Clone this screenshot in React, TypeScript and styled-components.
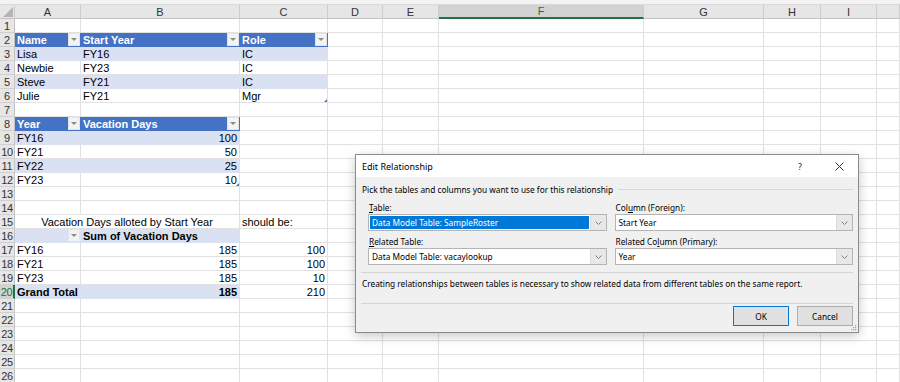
import React from "react";
import styled, { createGlobalStyle } from "styled-components";

const GRID = "#e1e1e1";
const BLUE = "#4472c4";
const BAND = "#d9e1f2";
const GREEN = "#217346";
const COLS = "15px 66px 159px 88px 55px 56px 205px 120px 57px 56px 1fr";

const Global = createGlobalStyle`
  html, body { margin: 0; padding: 0; background: #fff; overflow: hidden; }
  body { width: 900px; height: 382px; }
`;

const Page = styled.div`
  position: relative;
  width: 900px;
  height: 382px;
  overflow: hidden;
  font-family: "Liberation Sans", Arial, sans-serif;
  font-size: 11px;
  color: #000;
`;

const TopStrip = styled.div`
  height: 4px;
  background: #f3f3f3;
  border-bottom: 1px solid #dadada;
`;

const GridRow = styled.div`
  display: grid;
  grid-template-columns: ${COLS};
  height: 14px;
`;

const HeadCell = styled.div<{ $active?: boolean }>`
  box-sizing: border-box;
  height: 14px;
  background: ${(p) => (p.$active ? "#d2d2d2" : "#e6e6e6")};
  border-right: 1px solid #cdcdcd;
  border-bottom: ${(p) => (p.$active ? `2px solid ${GREEN}` : "1px solid #c4c4c4")};
  color: ${(p) => (p.$active ? GREEN : "#333")};
  display: flex;
  align-items: center;
  justify-content: center;
  font-size: 11px;
`;

const Corner = styled(HeadCell)`
  position: relative;
  svg { display: block; }
  align-items: flex-end;
  justify-content: flex-end;
  padding: 0 1px 1px 0;
`;

const RowHead = styled.div<{ $active?: boolean }>`
  box-sizing: border-box;
  height: 14px;
  background: ${(p) => (p.$active ? "#d2d2d2" : "#e6e6e6")};
  border-right: ${(p) => (p.$active ? `2px solid ${GREEN}` : "1px solid #c4c4c4")};
  border-bottom: 1px solid #d0d0d0;
  color: ${(p) => (p.$active ? GREEN : "#333")};
  display: flex;
  align-items: center;
  justify-content: center;
  font-size: 11px;
  letter-spacing: -0.3px;
`;

const Cell = styled.div<{
  $bg?: string;
  $color?: string;
  $bold?: boolean;
  $align?: string;
  $span?: number;
}>`
  grid-column: span ${(p) => p.$span || 1};
  position: relative;
  box-sizing: border-box;
  height: 14px;
  background: ${(p) => p.$bg || "#fff"};
  border-right: 1px solid ${(p) => p.$bg || GRID};
  border-bottom: 1px solid ${(p) => p.$bg || GRID};
  color: ${(p) => p.$color || "#000"};
  font-weight: ${(p) => (p.$bold ? 700 : 400)};
  display: flex;
  align-items: center;
  justify-content: ${(p) =>
    p.$align === "right" ? "flex-end" : p.$align === "center" ? "center" : "flex-start"};
  padding: 0 2px;
  white-space: nowrap;
`;

const CellText = styled.span<{ $grow?: boolean }>`
  flex: ${(p) => (p.$grow ? "1" : "0 0 auto")};
  overflow: visible;
`;

const FilterBtn = styled.span`
  flex: 0 0 12px;
  align-self: flex-start;
  height: 13px;
  margin-right: -2px;
  background: #f3f3f3;
  box-sizing: border-box;
  border: 1px solid #e4e4e4;
  display: flex;
  align-items: center;
  justify-content: center;
  &::after {
    content: "";
    width: 0;
    height: 0;
    border-left: 3px solid transparent;
    border-right: 3px solid transparent;
    border-top: 3px solid #8a8a8a;
  }
`;

const Marker = styled.span`
  position: absolute;
  right: 0;
  bottom: 0;
  width: 0;
  height: 0;
  border-left: 3px solid transparent;
  border-bottom: 3px solid ${BLUE};
`;

/* ---------- dialog ---------- */
const Dialog = styled.div`
  position: absolute;
  left: 355px;
  top: 154px;
  width: 504px;
  height: 179px;
  box-sizing: border-box;
  border: 1px solid #8a8a8a;
  background: #f0f0f0;
  box-shadow: 0 3px 10px rgba(0, 0, 0, 0.22);
  display: flex;
  flex-direction: column;
  font-family: "Noto Sans", "Open Sans", sans-serif;
  font-size: 8.3px;
  color: #000;
`;

const TitleBar = styled.div`
  height: 22px;
  background: #fff;
  display: flex;
  align-items: center;
  padding-left: 6px;
  flex: 0 0 auto;
`;

const Title = styled.span`
  flex: 1;
  font-size: 9px;
`;

const TitleBtn = styled.span<{ $w: number }>`
  width: ${(p) => p.$w}px;
  height: 22px;
  display: flex;
  align-items: center;
  justify-content: center;
  font-size: 9px;
  color: #222;
`;

const Body = styled.div`
  flex: 1;
  position: relative;
  padding: 6px 5px 0 6px;
  display: flex;
  flex-direction: column;
`;

const Heading = styled.div`
  height: 13px;
  display: flex;
  align-items: center;
  line-height: 13px;
  white-space: nowrap;
`;

const HeadLine = styled.span`
  flex: 1;
  height: 0;
  border-top: 1px solid #d7d7d7;
  margin-left: 5px;
`;

const Fields = styled.div`
  display: grid;
  grid-template-columns: 1fr 1fr;
  column-gap: 8px;
  margin: 5px 0 0 6px;
`;

const Field = styled.div<{ $top?: number }>`
  display: flex;
  flex-direction: column;
  margin-top: ${(p) => p.$top || 0}px;
`;

const Label = styled.div`
  height: 13px;
  line-height: 13px;
  margin-left: 1px;
  white-space: nowrap;
`;

const Combo = styled.div`
  height: 17px;
  box-sizing: border-box;
  background: #fff;
  border: 1px solid #b4b4b4;
  display: flex;
  align-items: stretch;
`;

const ComboText = styled.div<{ $sel?: boolean }>`
  flex: 1;
  margin: 1px;
  padding-left: 2px;
  display: flex;
  align-items: center;
  background: ${(p) => (p.$sel ? "#0078d7" : "transparent")};
  color: ${(p) => (p.$sel ? "#fff" : "#000")};
  white-space: nowrap;
`;

const ComboBtn = styled.div`
  width: 15px;
  background: #e8e8e8;
  border-left: 1px solid #dcdcdc;
  display: flex;
  align-items: center;
  justify-content: center;
`;

const Sep = styled.div<{ $top: number }>`
  margin-top: ${(p) => p.$top}px;
  margin-left: -1px;
  height: 0;
  border-top: 1px solid #d5d5d5;
`;

const Note = styled.div`
  margin-top: 4px;
  height: 13px;
  line-height: 13px;
  white-space: nowrap;
`;

const Buttons = styled.div`
  display: flex;
  justify-content: flex-end;
  gap: 8px;
  margin-top: 2px;
`;

const Btn = styled.div<{ $primary?: boolean }>`
  width: 56px;
  height: 20px;
  box-sizing: border-box;
  background: #e1e1e1;
  border: 1px solid ${(p) => (p.$primary ? "#0078d7" : "#adadad")};
  display: flex;
  align-items: center;
  justify-content: center;
`;

const Grip = styled.svg`
  position: absolute;
  right: 1px;
  bottom: 1px;
`;

type CellDef = {
  t?: string;
  v?: "hdr" | "band";
  align?: "left" | "right" | "center";
  bold?: boolean;
  filter?: boolean;
  marker?: boolean;
  span?: number;
};

const E: CellDef = {};
const hdr = (t: string, filter = true): CellDef => ({ t, v: "hdr", bold: true, filter });
const band = (t = "", align?: "right"): CellDef => ({ t, v: "band", align });

const rows: CellDef[][] = [
  [], // 1
  [hdr("Name"), hdr("Start Year"), hdr("Role")], // 2
  [band("Lisa"), band("FY16"), band("IC")], // 3
  [{ t: "Newbie" }, { t: "FY23" }, { t: "IC" }], // 4
  [band("Steve"), band("FY21"), band("IC")], // 5
  [{ t: "Julie" }, { t: "FY21" }, { t: "Mgr", marker: true }], // 6
  [], // 7
  [hdr("Year"), hdr("Vacation Days")], // 8
  [band("FY16"), band("100", "right")], // 9
  [{ t: "FY21" }, { t: "50", align: "right" }], // 10
  [band("FY22"), band("25", "right")], // 11
  [{ t: "FY23" }, { t: "10", align: "right", marker: true }], // 12
  [], // 13
  [], // 14
  [{ t: "Vacation Days alloted by Start Year", span: 2, align: "center" }, { t: "should be:" }], // 15
  [{ v: "band", filter: true }, { t: "Sum of Vacation Days", v: "band", bold: true }], // 16
  [{ t: "FY16" }, { t: "185", align: "right" }, { t: "100", align: "right" }], // 17
  [{ t: "FY21" }, { t: "185", align: "right" }, { t: "100", align: "right" }], // 18
  [{ t: "FY23" }, { t: "185", align: "right" }, { t: "10", align: "right" }], // 19
  [
    { t: "Grand Total", v: "band", bold: true },
    { t: "185", v: "band", bold: true, align: "right" },
    { t: "210", align: "right" },
  ], // 20
  [], [], [], [], [], [], // 21-26
];

const colLetters = ["A", "B", "C", "D", "E", "F", "G", "H", "I", ""];

function padRow(cells: CellDef[]): CellDef[] {
  const used = cells.reduce((s, c) => s + (c.span || 1), 0);
  const out = [...cells];
  for (let i = used; i < 10; i++) out.push(E);
  return out;
}

const Chevron = () => (
  <svg width="7" height="4" viewBox="0 0 7 4">
    <polyline points="0.5,0.5 3.5,3.5 6.5,0.5" fill="none" stroke="#808080" strokeWidth="1" />
  </svg>
);

export default function App() {
  return (
    <Page>
      <Global />
      <TopStrip />
      <GridRow>
        <Corner>
          <svg width="10" height="10" viewBox="0 0 10 10">
            <polygon points="10,0 10,10 0,10" fill="#b5b5b5" />
          </svg>
        </Corner>
        {colLetters.map((l, i) => (
          <HeadCell key={i} $active={l === "F"}>
            {l}
          </HeadCell>
        ))}
      </GridRow>
      {rows.map((r, ri) => (
        <GridRow key={ri}>
          <RowHead $active={ri + 1 === 20}>{ri + 1}</RowHead>
          {padRow(r).map((c, ci) => (
            <Cell
              key={ci}
              $span={c.span}
              $bg={c.v === "hdr" ? BLUE : c.v === "band" ? BAND : undefined}
              $color={c.v === "hdr" ? "#fff" : undefined}
              $bold={c.bold}
              $align={c.align}
            >
              {c.t !== undefined && <CellText $grow={!!c.filter}>{c.t}</CellText>}
              {c.filter && !c.t && <CellText $grow />}
              {c.filter && <FilterBtn />}
              {c.marker && <Marker />}
            </Cell>
          ))}
        </GridRow>
      ))}

      <Dialog>
        <TitleBar>
          <Title>Edit Relationship</Title>
          <TitleBtn $w={40}>?</TitleBtn>
          <TitleBtn $w={38}>
            <svg width="9" height="9" viewBox="0 0 9 9">
              <path d="M0.5 0.5 L8.5 8.5 M8.5 0.5 L0.5 8.5" stroke="#333" strokeWidth="1" />
            </svg>
          </TitleBtn>
        </TitleBar>
        <Body>
          <Heading>
            <span>Pick the tables and columns you want to use for this relationship</span>
            <HeadLine />
          </Heading>
          <Fields>
            <Field>
              <Label>
                <u>T</u>able:
              </Label>
              <Combo>
                <ComboText $sel>Data Model Table: SampleRoster</ComboText>
                <ComboBtn>
                  <Chevron />
                </ComboBtn>
              </Combo>
            </Field>
            <Field>
              <Label>
                Col<u>u</u>mn (Foreign):
              </Label>
              <Combo>
                <ComboText>Start Year</ComboText>
                <ComboBtn>
                  <Chevron />
                </ComboBtn>
              </Combo>
            </Field>
            <Field $top={4}>
              <Label>
                <u>R</u>elated Table:
              </Label>
              <Combo>
                <ComboText>Data Model Table: vacaylookup</ComboText>
                <ComboBtn>
                  <Chevron />
                </ComboBtn>
              </Combo>
            </Field>
            <Field $top={4}>
              <Label>
                Related Co<u>l</u>umn (Primary):
              </Label>
              <Combo>
                <ComboText>Year</ComboText>
                <ComboBtn>
                  <Chevron />
                </ComboBtn>
              </Combo>
            </Field>
          </Fields>
          <Sep $top={7} />
          <Note>
            Creating relationships between tables is necessary to show related data from different
            tables on the same report.
          </Note>
          <Sep $top={13} />
          <Buttons>
            <Btn $primary>OK</Btn>
            <Btn>Cancel</Btn>
          </Buttons>
          <Grip width="7" height="7" viewBox="0 0 7 7">
            <g fill="#a0a0a0">
              <rect x="5" y="1" width="1.2" height="1.2" />
              <rect x="3" y="3" width="1.2" height="1.2" />
              <rect x="5" y="3" width="1.2" height="1.2" />
              <rect x="1" y="5" width="1.2" height="1.2" />
              <rect x="3" y="5" width="1.2" height="1.2" />
              <rect x="5" y="5" width="1.2" height="1.2" />
            </g>
          </Grip>
        </Body>
      </Dialog>
    </Page>
  );
}
